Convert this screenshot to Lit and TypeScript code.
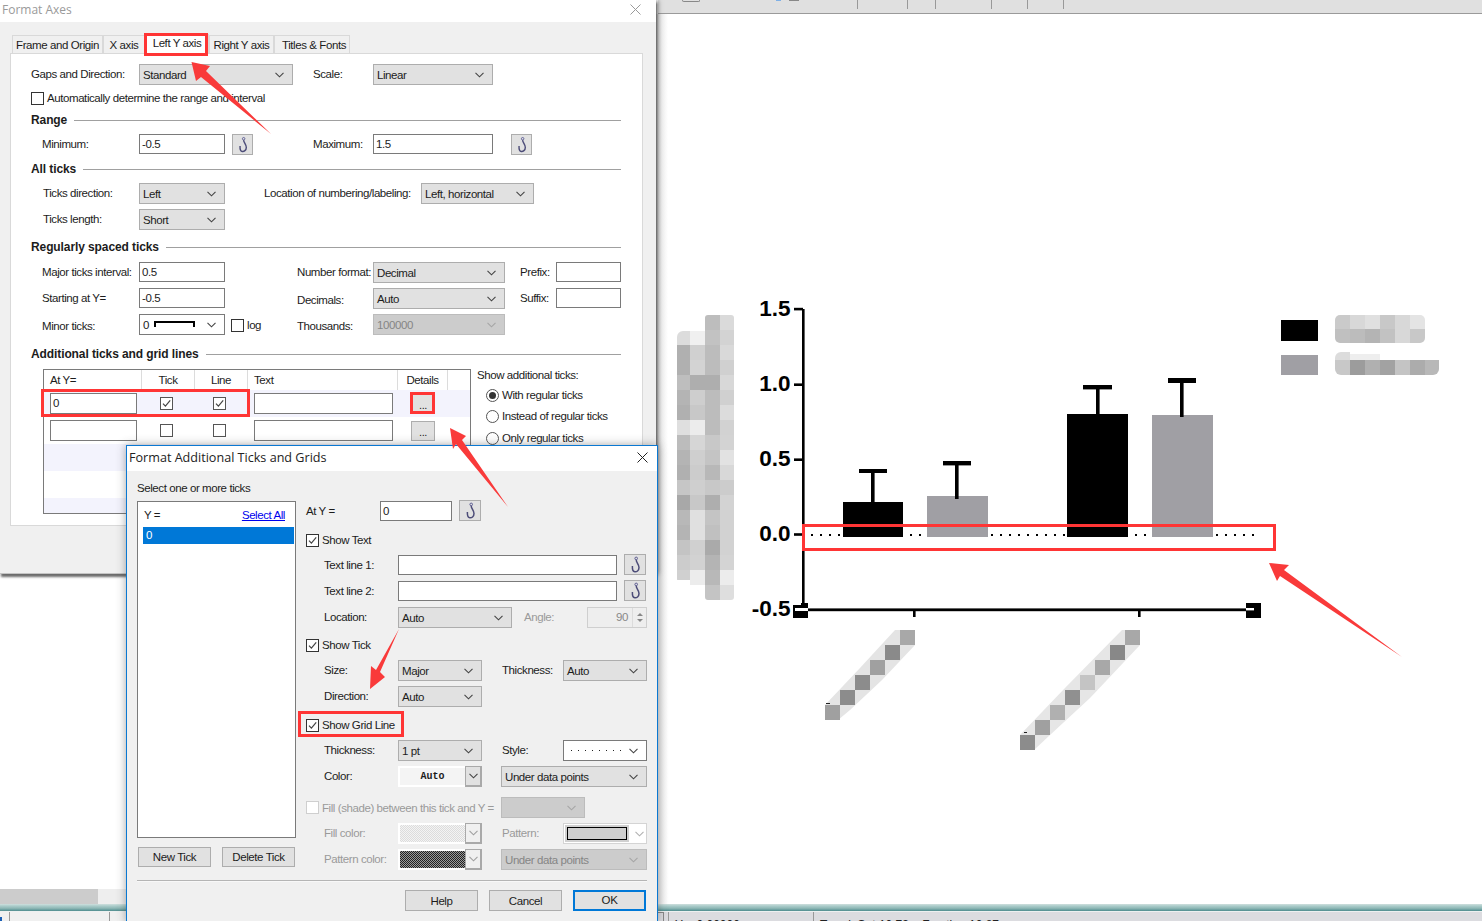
import { LitElement, html, css, svg, nothing } from "lit";
import { customElement } from "lit/decorators.js";

const chevron = html`<svg class="chev" viewBox="0 0 9 6" width="9" height="6"><path d="M0.5 0.8 L4.5 4.8 L8.5 0.8" fill="none" stroke="currentColor" stroke-width="1.1"/></svg>`;

const hook = html`<svg viewBox="0 0 20 20" width="20" height="20"><circle cx="11.2" cy="3.4" r="1.3" fill="none" stroke="#5b5b92" stroke-width="1"/><path d="M11.3 4.8 C10.8 7 14 9 14 12.5 C14 15.8 11.5 17 9.8 16.8 C8 16.6 7.2 15 7.4 11" fill="none" stroke="#4c4c78" stroke-width="1.5"/></svg>`;

const tick = html`<svg viewBox="0 0 11 11" width="11" height="11"><path d="M2 5.6 L4.4 8.2 L9.2 2.4" fill="none" stroke="#444" stroke-width="1.2"/></svg>`;

function sel(text: unknown, cls = "") {
  return html`<div class="sel ${cls}"><span class="sel-t">${text}</span>${chevron}</div>`;
}
function inp(text = "", cls = "") {
  return html`<div class="inp ${cls}">${text}</div>`;
}
function hk() {
  return html`<div class="hk">${hook}</div>`;
}
function cb(checked = false, cls = "") {
  return html`<span class="cb ${cls}">${checked ? tick : nothing}</span>`;
}
function radio(on: boolean, label: string) {
  return html`<div class="radio-row"><span class="radio">${on ? html`<i></i>` : nothing}</span>${label}</div>`;
}
function colorBox(cls: string, text = "") {
  return html`<div class="cbox ${cls}"><div class="cbox-in">${text}</div><div class="cbox-arrow">${chevron}</div></div>`;
}

const mos = [
  [null, null, 0xbd, 0xda],
  [0xdc, 0xf0, 0xc2, 0xd3],
  [0xb0, 0xd0, 0xbc, 0xd9],
  [0xb0, 0xd3, 0xbc, 0xd0],
  [0xbe, 0xae, 0xae, 0xd8],
  [0xb4, 0xce, 0xbc, 0xd0],
  [0xb0, 0xc8, 0xbc, 0xdc],
  [0xdf, 0xec, 0xbc, 0xd2],
  [0xbc, 0xd6, 0xc8, 0xd3],
  [0xb4, 0xcf, 0xc4, 0xe2],
  [0xb0, 0xcc, 0xb8, 0xd8],
  [0xc6, 0xcf, 0xc8, 0xcc],
  [0xa8, 0xc8, 0xae, 0xd3],
  [0xb8, 0xe0, 0xc4, 0xd2],
  [0xb4, 0xe0, 0xc0, 0xd2],
  [0xc4, 0xd0, 0xaa, 0xd2],
  [0xcc, 0xd2, 0xb4, 0xd4],
  [0xd0, 0xec, 0xb8, 0xec],
  [null, null, 0xc4, 0xde],
];
const colX = [677, 690, 705, 720];
const colW = [13, 15, 15, 14];
const g = (v: number) => `rgb(${v},${v},${v})`;

function cells(list: [number, number, number, number, number][]) {
  return list.map(([x, y, w, h, v]) => svg`<rect x=${x} y=${y} width=${w} height=${h} fill=${g(v)} />`);
}

function chart() {
  const ylab: [string, number][] = [["1.5", 309], ["1.0", 384], ["0.5", 459], ["0.0", 534], ["-0.5", 609]];
  const mosaic: [number, number, number, number, number][] = [];
  mos.forEach((row, r) =>
    row.forEach((v, c) => {
      if (v !== null) mosaic.push([colX[c], 315 + r * 15, colW[c], r === 17 && c === 0 ? 10 : 15, v]);
    })
  );
  const diag1: [number, number, number, number, number][] = [
    [900, 630, 15, 15, 0xa8], [885, 645, 15, 15, 0x8a], [870, 660, 15, 15, 0xa0],
    [855, 675, 15, 15, 0x8c], [840, 690, 15, 15, 0x8c], [825, 705, 15, 15, 0xa0],
  ];
  const diag2: [number, number, number, number, number][] = [
    [1125, 630, 15, 15, 0xa8], [1110, 645, 15, 15, 0x88], [1095, 660, 15, 15, 0xa8],
    [1080, 675, 15, 15, 0xc4], [1065, 690, 15, 15, 0x90], [1050, 705, 15, 15, 0xb0],
    [1035, 720, 15, 15, 0xa0], [1020, 735, 15, 15, 0x8c],
  ];
  const leg1: [number, number, number, number, number][] = [
    [1335, 315, 15, 14, 0xca], [1350, 315, 15, 14, 0xd8], [1365, 315, 15, 14, 0xe0],
    [1380, 315, 15, 14, 0xc8], [1395, 315, 15, 14, 0xd8], [1410, 315, 15, 14, 0xe4],
    [1335, 329, 15, 14, 0xc0], [1350, 329, 15, 14, 0xbc], [1365, 329, 15, 14, 0xb4],
    [1380, 329, 15, 14, 0xc2], [1395, 329, 15, 14, 0xd8], [1410, 329, 15, 14, 0xc8],
  ];
  const leg2: [number, number, number, number, number][] = [
    [1335, 352, 15, 8, 0xdc], [1350, 354, 30, 6, 0xee],
    [1335, 360, 15, 15, 0xc8], [1350, 360, 15, 15, 0x9c], [1365, 360, 15, 15, 0xb0],
    [1380, 360, 15, 15, 0xa2], [1395, 360, 15, 15, 0xc4], [1410, 360, 15, 15, 0xac], [1425, 360, 14, 15, 0xb8],
  ];
  return svg`
    <defs>
      <clipPath id="lg1"><rect x="1335" y="315" width="90" height="28" rx="5"/></clipPath>
      <clipPath id="lg2"><rect x="1335" y="352" width="104" height="23" rx="6"/></clipPath>
      <clipPath id="mm"><rect x="677" y="331" width="57" height="254" rx="6"/><rect x="705" y="315" width="29" height="285" rx="3"/></clipPath>
    </defs>
    <g clip-path="url(#mm)">${cells(mosaic)}</g>
    <polygon points="895,630 915,630 915,645 882,680 850,710 838,720 825,720 825,705 860,668" fill="#e4e4e4"/>
    ${cells(diag1)}
    <polygon points="1122,630 1140,630 1140,645 1090,698 1050,735 1034,750 1020,750 1020,735 1065,688" fill="#e6e6e6"/>
    ${cells(diag2)}
    <rect x="826" y="703" width="4" height="1" fill="#222"/>
    <rect x="1024" y="732" width="3" height="1" fill="#222"/>
    <g clip-path="url(#lg1)">${cells(leg1)}</g>
    <g clip-path="url(#lg2)">${cells(leg2)}</g>
    <rect x="1281" y="320" width="37" height="21" fill="#000"/>
    <rect x="1281" y="355" width="37" height="20" fill="#a09fa4"/>
    <line x1="811" y1="535" x2="1254" y2="535" stroke="#000" stroke-width="2" stroke-dasharray="2 7"/>
    <rect x="802" y="309" width="2.6" height="301" fill="#000"/>
    <rect x="802" y="608.4" width="446" height="2.8" fill="#000"/>
    ${[309, 384.6, 459.6, 534.4].map((y) => svg`<rect x="794" y=${y - 1.2} width="9" height="2.6" fill="#000"/>`)}
    ${ylab.map(([t, y]) => svg`<text x="790.5" y=${y + 7} class="axis" text-anchor="end">${t}</text>`)}
    <rect x="793" y="603" width="15" height="15" fill="#000"/>
    <rect x="795" y="608" width="13" height="3" fill="#fff"/>
    <rect x="793" y="603" width="8" height="2" fill="#fff"/>
    <rect x="1246" y="603" width="15" height="15" fill="#000"/>
    <rect x="1246" y="608" width="8" height="2.4" fill="#fff"/>
    <rect x="913" y="611" width="2.6" height="6" fill="#000"/>
    <rect x="1138" y="611" width="2.6" height="6" fill="#000"/>
    <rect x="843" y="502" width="60" height="35" fill="#000"/>
    <rect x="927" y="496" width="61" height="41" fill="#a09fa4"/>
    <rect x="1067" y="414" width="61" height="123" fill="#000"/>
    <rect x="1152" y="415" width="61" height="122" fill="#a09fa4"/>
    <rect x="871" y="471" width="3.6" height="32" fill="#000"/>
    <rect x="859" y="469" width="28" height="4" fill="#000"/>
    <rect x="955" y="463" width="3.6" height="36" fill="#000"/>
    <rect x="943" y="461" width="28" height="4.4" fill="#000"/>
    <rect x="1096" y="387" width="3.6" height="28" fill="#000"/>
    <rect x="1083" y="385" width="29" height="4.4" fill="#000"/>
    <rect x="1180" y="380" width="3.6" height="37" fill="#000"/>
    <rect x="1168" y="378" width="28" height="5" fill="#000"/>
    <rect x="803.5" y="525.5" width="471" height="24" fill="none" stroke="#ff3535" stroke-width="3"/>
    <polygon points="1269,563 1289,565 1284,570 1402,657 1280,576 1277,581" fill="#f93a3a"/>
  `;
}

function arrows() {
  return svg`
    <polygon points="191.5,62 210,66 206,71 271,134 201,77 196,81" fill="#f93a3a"/>
    <polygon points="450,428 466,436 462,440 508,507 456,444 453,449" fill="#f93a3a"/>
    <polygon points="399,629 380,672 385,677 370,689 371,666 376,670" fill="#f93a3a"/>
  `;
}

@customElement("app-root")
export class AppRoot extends LitElement {
  static styles = css`
    :host {
      display: flex;
      flex-direction: column;
      position: relative;
      width: 1482px;
      height: 921px;
      overflow: hidden;
      background: #fff;
      font-family: "Liberation Sans", Arial, sans-serif;
      font-size: 11.5px;
      letter-spacing: -0.42px;
      color: #1c1c1c;
    }
    * { box-sizing: border-box; }

    /* page frame */
    .toolbar {
      height: 14px;
      margin-left: 658px;
      background: #e0e0e0;
      border-bottom: 1px solid #9a9a9a;
      display: flex;
      position: relative;
    }
    .tb-oval { width: 18px; height: 2px; margin-left: 24px; border: 1px solid #888; border-top: 0; border-radius: 0 0 5px 5px; }
    .tb-blue { width: 5px; height: 1px; margin-left: 76px; background: #7fb0e6; }
    .tb-grey { width: 10px; height: 1px; margin-left: 8px; background: #888; }
    .tb-sep { width: 1px; height: 9px; background: #999; }
    .ms56 { margin-left: 58px; } .ms49 { margin-left: 49px; } .ms27 { margin-left: 27px; } .ms55 { margin-left: 55px; } .ms35 { margin-left: 35px; }
    .canvas { flex: 1; }
    .lowstrip { height: 15px; display: flex; }
    .ls-a { width: 98px; background: #cccccc; }
    .ls-b { width: 30px; background: #eeeeee; }
    .teal {
      height: 7px;
      background: linear-gradient(#cfdfdd 0%, #a9cbc9 30%, #8fb8b6 60%, #4f8d8f 100%);
    }
    .status { height: 10px; display: flex; background: #dcdce0; overflow: hidden; border-top: 1px solid #eef0f0; color: #222; font-size: 12px; letter-spacing: 0; }
    .st-left { width: 658px; background: #f0f0f0; display: flex; flex: none; }
    .st-blue { width: 2px; height: 4px; margin-top: 5px; background: #1a5fb4; }
    .st-s1 { width: 100px; margin-left: 7px; border-left: 1px solid #999; }
    .st-s2 { width: 1px; background: #999; }
    .st-box { width: 6px; border: 1px solid #888; border-left: 0; height: 10px; }
    .st-cell { border-left: 1px solid #999; padding: 7px 0 0 6px; white-space: nowrap; line-height: 13px; }
    .st-c1 { width: 145px; margin-left: 4px; }
    .st-c2 { flex: 1; }

    /* windows */
    .win { position: absolute; display: flex; flex-direction: column; background: #f0f0f0; }
    .axes {
      left: 0; top: 0; width: 656px; height: 574px;
      border-bottom: 1px solid #c4c4c4;
      box-shadow: 1px 3px 2px rgba(70, 70, 70, 0.75), 3px 0 4px rgba(90, 90, 90, 0.5);
    }
    .title { background: #fff; display: flex; align-items: center; justify-content: space-between; flex: none; font-family: "Open Sans", "Liberation Sans", sans-serif; letter-spacing: 0; }
    .axes .title { height: 22px; padding: 0 15px 4px 2px; color: #9a9a9a; font-size: 12px; }
    .x { width: 11px; height: 11px; display: block; }
    .axes-body { flex: 1; padding: 12px 13px 0 10px; display: flex; flex-direction: column; }
    .tabs { display: flex; height: 19px; padding-left: 2px; align-items: flex-end; }
    .tab { height: 18px; line-height: 18px; background: #f0f0f0; border: 1px solid #d9d9d9; border-bottom: 0; text-align: center; white-space: nowrap; }
    .t1 { width: 91px; } .t2 { width: 42px; } .t3 { width: 64px; height: 20px; background: #fff; line-height: 16px; position: relative; z-index: 1; margin-bottom: -1px; } .t4 { width: 65px; } .t5 { width: 76px; padding-left: 4px; }
    .panel { height: 473px; background: #fff; border: 1px solid #d9d9d9; padding: 10px 21px 0 20px; display: flex; flex-direction: column; position: relative; }

    .row { display: grid; height: 21px; align-items: start; flex: none; }
    .row > .lb { line-height: 20px; white-space: nowrap; }
    .lb-in { padding-left: 11px; }
    .lb-in2 { padding-left: 12px; }
    .ra { grid-template-columns: 108px 154px 20px 60px 120px; }
    .rb { grid-template-columns: 108px 86px 7px 21px 60px 60px 120px 18px 21px; }
    .rc { grid-template-columns: 108px 86px 39px 157px 113px; }
    .rd { grid-template-columns: 108px 86px; }
    .re { grid-template-columns: 108px 86px 72px 76px 132px 15px 36px 65px; }
    .lb.low { padding-top: 2px; }
    .chk-row { display: flex; align-items: center; height: 14px; flex: none; white-space: nowrap; }
    .chk-row .cb { margin-right: 3px; }
    .log { margin: 4px 0 0 6px; }
    .hd { display: flex; align-items: center; height: 14px; font-weight: bold; font-size: 12px; flex: none; white-space: nowrap; letter-spacing: -0.1px; }
    .hd::after { content: ""; flex: 1; height: 1px; background: #a0a0a0; margin-left: 7px; }
    .mt5 { margin-top: 5px; } .mt6 { margin-top: 6px; } .mt7 { margin-top: 7px; } .mt8 { margin-top: 8px; }
    .mt9 { margin-top: 9px; } .mt10 { margin-top: 10px; } .mt11 { margin-top: 11px; } .mt12 { margin-top: 12px; }

    /* controls */
    .sel { height: 21px; background: #e1e1e1; border: 1px solid #adadad; display: flex; align-items: center; justify-content: space-between; padding: 0 8px 0 3px; color: #333; white-space: nowrap; }
    .sel-t { display: flex; align-items: center; gap: 5px; color: #1c1c1c; }
    .sel .chev { color: #444; flex: none; }
    .sel.wh { background: #fff; border-color: #7a7a7a; }
    .sel.dis { background: #cccccc; border-color: #bcbcbc; }
    .sel.dis .sel-t { color: #858585; }
    .sel.dis .chev { color: #a6a6a6; }
    .inp { height: 20px; background: #fff; border: 1px solid #7a7a7a; padding: 0 2px; line-height: 18px; }
    .hk { height: 21px; width: 21px; background: #e1e1e1; border: 1px solid #adadad; display: flex; align-items: center; justify-content: center; }
    .cb { width: 13px; height: 13px; background: #fff; border: 1px solid #333; display: inline-flex; align-items: center; justify-content: center; flex: none; }
    .cb.soft { border-color: #555; }
    .cb.off { border-color: #cfcfcf; }

    /* additional ticks table */
    .tbl-wrap { display: flex; margin-left: 12px; height: 145px; flex: none; }
    .tbl { width: 428px; height: 145px; border: 1px solid #7a7a7a; background: #fff; flex: none; position: relative; }
    .tr { display: grid; grid-template-columns: 98px 53px 53px 150px 50px; align-items: center; height: 27px; }
    .th { height: 20px; }
    .th > div { height: 20px; line-height: 20px; border-right: 1px solid #dcdcdc; }
    .th .tc { text-align: center; }
    .th .tl { padding-left: 6px; }
    .alt { background: #f3f3fd; }
    .short { height: 15px; }
    .cell-in { padding-left: 6px; }
    .cell-cb { padding-left: 18px; display: flex; }
    .cell-in .inp { height: 21px; line-height: 19px; }
    .w87 { width: 87px; } .w139 { width: 139px; }
    .det { width: 24px; height: 20px; margin-left: 13px; background: #e1e1e1; border: 1px solid #adadad; text-align: center; line-height: 20px; font-size: 11px; }
    .red { position: absolute; border: 3px solid #ff3535; z-index: 2; }
    .red1 { left: -3px; top: 19px; width: 209px; height: 28px; }
    .red2 { left: 366px; top: 22px; width: 25px; height: 22px; }
    .tabred { left: -2px; top: -2px; width: 64px; height: 23px; }
    .tbl-side { margin-left: 6px; white-space: nowrap; }
    .side-t { line-height: 13px; }
    .radio-row { display: flex; align-items: center; height: 14px; margin: 7px 0 0 9px; }
    .radio-row:nth-child(2) { margin-top: 6px; }
    .radio-row:nth-child(4) { margin-top: 8px; }
    .radio { width: 13px; height: 13px; border-radius: 50%; border: 1px solid #555; background: #fff; display: inline-flex; align-items: center; justify-content: center; margin-right: 3px; }
    .radio i { width: 7px; height: 7px; border-radius: 50%; background: #333; }

    /* second dialog */
    .ticks {
      left: 126px; top: 445px; width: 532px; height: 478px;
      border: 1px solid #0a78d2;
      box-shadow: 0 0 9px rgba(60, 60, 60, 0.45);
      z-index: 3;
    }
    .ticks .title { height: 25px; padding: 0 9px 3px 2px; color: #222; font-size: 12.6px; }
    .ticks-body { flex: 1; padding: 10px 10px 0 10px; display: flex; flex-direction: column; }
    .sel-hint { height: 14px; line-height: 14px; flex: none; }
    .main { display: flex; margin-top: 6px; flex: none; height: 370px; }
    .left { width: 159px; flex: none; margin-right: 10px; display: flex; flex-direction: column; }
    .list { height: 337px; background: #fff; border: 1px solid #7a7a7a; padding: 0 1px 0 5px; }
    .list-h { height: 25px; display: flex; justify-content: space-between; align-items: center; padding: 0 9px 0 1px; }
    .link { color: #0000ee; text-decoration: underline; }
    .list-i { height: 17px; line-height: 17px; background: #0078d7; color: #fff; padding-left: 3px; }
    .lbtns { display: flex; margin-top: 9px; padding-left: 1px; gap: 11px; }
    .btn { width: 73px; height: 20px; background: #e1e1e1; border: 1px solid #adadad; text-align: center; line-height: 18px; }
    .right { width: 341px; display: flex; flex-direction: column; }
    .r-at { grid-template-columns: 74px 72px 7px 22px; height: 20px; }
    .r-at .hk, .r-t .hk { margin-top: -1px; width: 22px; }
    .r-t { grid-template-columns: 92px 219px 7px 22px; }
    .r-l { grid-template-columns: 92px 114px 12px 63px 60px; }
    .r-s { grid-template-columns: 92px 84px 20px 61px 84px; }
    .r-d { grid-template-columns: 92px 84px; }
    .r-c { grid-template-columns: 92px 84px 19px 146px; }
    .r-f { grid-template-columns: 195px 84px; }
    .in18 { padding-left: 18px; }
    .g { color: #9a9a9a; }
    .r-f .chk-row { height: 21px; color: #9a9a9a; }
    .spin { height: 21px; border: 1px solid #cfcfcf; background: #eeeeee; color: #888; text-align: right; padding-right: 18px; line-height: 19px; position: relative; }
    .spin-b { position: absolute; right: 0; top: 0; bottom: 0; width: 14px; border-left: 1px solid #dcdcdc; display: flex; flex-direction: column; align-items: center; justify-content: center; gap: 3px; }
    .spin-b i { width: 0; height: 0; border-left: 3px solid transparent; border-right: 3px solid transparent; }
    .up { border-bottom: 3px solid #888; }
    .dn { border-top: 3px solid #888; }
    .dots { width: 52px; height: 1px; background: repeating-linear-gradient(90deg, #222 0 1px, transparent 1px 7px); display: block; }
    .sel.st { padding-left: 7px; border-color: #7a7a7a; background: #fff; }
    .cbox { height: 21px; display: flex; background: #fff; }
    .cbox-in { flex: 1; margin: 2px 0 2px 2px; background: #f4f4f4; text-align: center; line-height: 17px; font-family: "Liberation Mono", monospace; font-weight: bold; font-size: 10px; letter-spacing: 0; }
    .cbox-arrow { width: 17px; background: #e1e1e1; border: 1px solid #a9a9a9; border-right-width: 2px; border-bottom-width: 2px; display: flex; align-items: center; justify-content: center; color: #444; }
    .cbox.light .cbox-in { background: repeating-conic-gradient(#dcdcdc 0% 25%, #f4f4f4 0% 50%) 0 0 / 2px 2px; }
    .cbox.dark .cbox-in { background: repeating-conic-gradient(#222 0% 25%, #9a9a9a 0% 50%) 0 0 / 2px 2px; }
    .cbox.light .cbox-arrow, .cbox.dark .cbox-arrow { background: #f0f0f0; color: #a0a0a0; }
    .pat { height: 21px; display: flex; align-items: center; background: #fff; border: 1px solid #d4d4d4; }
    .pat-in { width: 64px; height: 17px; margin-left: 1px; background: #d0d0d0; display: flex; align-items: center; justify-content: center; }
    .pat-in i { width: 60px; height: 13px; background: #cfcfcf; border: 1px solid #000; display: block; }
    .pat .chev { color: #b0b0b0; margin-left: 6px; }
    .sep { height: 2px; background: #b5b5b5; margin-top: 9px; flex: none; border-bottom: 1px solid #f8f8f8; }
    .foot { display: flex; justify-content: flex-end; gap: 11px; margin-top: 8px; padding-right: 1px; }
    .foot .btn { height: 21px; line-height: 20px; }
    .ok { border: 2px solid #0078d7; line-height: 17px !important; }
    .grid-red { position: absolute; left: 171px; top: 265px; width: 106px; height: 26px; border: 3px solid #ff3535; }

    .ov { position: absolute; left: 0; top: 0; width: 1482px; height: 921px; pointer-events: none; letter-spacing: 0; }
    .ov-chart { z-index: 0; }
    .ov-arrows { z-index: 4; }
    .axis { font-family: "Liberation Sans", Arial, sans-serif; font-weight: bold; font-size: 22.5px; fill: #000; }
    .chrome-edge { position: absolute; left: 656px; top: 14px; width: 12px; height: 890px; background: linear-gradient(90deg, #dedede, #fff); }
  `;

  private closeX() {
    return html`<svg class="x" viewBox="0 0 11 11"><path d="M0.5 0.5 L10.5 10.5 M10.5 0.5 L0.5 10.5" fill="none" stroke="currentColor" stroke-width="1"/></svg>`;
  }

  render() {
    return html`
      <div class="toolbar">
        <div class="tb-oval"></div><div class="tb-blue"></div><div class="tb-grey"></div>
        <div class="tb-sep ms56"></div><div class="tb-sep ms49"></div><div class="tb-sep ms27"></div>
        <div class="tb-sep ms55"></div><div class="tb-sep ms35"></div><div class="tb-sep ms35"></div>
      </div>
      <div class="canvas"></div>
      <div class="lowstrip"><div class="ls-a"></div><div class="ls-b"></div></div>
      <div class="teal"></div>
      <div class="status">
        <div class="st-left">
          <div class="st-blue"></div><div class="st-s1"></div><div class="st-s2"></div>
        </div>
        <div class="st-box"></div>
        <div class="st-cell st-c1">Y = 0.00000</div>
        <div class="st-cell st-c2">Trend: Set 10.73 &nbsp;&nbsp; Fraction 10.87</div>
      </div>

      <div class="chrome-edge"></div>
      <svg class="ov ov-chart" viewBox="0 0 1482 921">${chart()}</svg>

      ${this.axesWindow()}
      ${this.ticksWindow()}

      <svg class="ov ov-arrows" viewBox="0 0 1482 921">${arrows()}</svg>
    `;
  }

  private axesWindow() {
    return html`
      <div class="win axes">
        <div class="title"><span>Format Axes</span>${this.closeX()}</div>
        <div class="axes-body">
          <div class="tabs">
            <div class="tab t1">Frame and Origin</div>
            <div class="tab t2">X axis</div>
            <div class="tab t3">Left Y axis<div class="red tabred"></div></div>
            <div class="tab t4">Right Y axis</div>
            <div class="tab t5">Titles &amp; Fonts</div>
          </div>
          <div class="panel">
            <div class="row ra">
              <div class="lb">Gaps and Direction:</div>${sel("Standard")}<div></div>
              <div class="lb">Scale:</div>${sel("Linear")}
            </div>
            <div class="chk-row mt6">${cb()}Automatically determine the range and interval</div>
            <div class="hd mt8">Range</div>
            <div class="row rb mt7">
              <div class="lb lb-in">Minimum:</div>${inp("-0.5")}<div></div>${hk()}<div></div>
              <div class="lb">Maximum:</div>${inp("1.5")}<div></div>${hk()}
            </div>
            <div class="hd mt7">All ticks</div>
            <div class="row rc mt7">
              <div class="lb lb-in2">Ticks direction:</div>${sel("Left")}<div></div>
              <div class="lb">Location of numbering/labeling:</div>${sel("Left, horizontal")}
            </div>
            <div class="row rd mt5">
              <div class="lb lb-in2">Ticks length:</div>${sel("Short")}
            </div>
            <div class="hd mt10">Regularly spaced ticks</div>
            <div class="row re mt8">
              <div class="lb lb-in">Major ticks interval:</div>${inp("0.5")}<div></div>
              <div class="lb">Number format:</div>${sel("Decimal")}<div></div>
              <div class="lb">Prefix:</div>${inp()}
            </div>
            <div class="row re mt5">
              <div class="lb lb-in">Starting at Y=</div>${inp("-0.5")}<div></div>
              <div class="lb low">Decimals:</div>${sel("Auto")}<div></div>
              <div class="lb">Suffix:</div>${inp()}
            </div>
            <div class="row re mt5">
              <div class="lb lb-in low">Minor ticks:</div>
              ${sel(html`0<svg width="42" height="8" viewBox="0 0 42 8"><path d="M1 6 V1 H40 V6" fill="none" stroke="#000" stroke-width="2"/></svg>`, "wh")}
              <div class="chk-row log">${cb(false)}log</div>
              <div class="lb low">Thousands:</div>${sel("100000", "dis")}
            </div>
            <div class="hd mt12">Additional ticks and grid lines</div>
            <div class="tbl-wrap mt8">
              <div class="tbl">
                <div class="tr th">
                  <div class="tl">At Y=</div><div class="tc">Tick</div><div class="tc">Line</div><div class="tl">Text</div><div class="tc">Details</div>
                </div>
                <div class="tr alt">
                  <div class="cell-in">${inp("0", "w87")}</div>
                  <div class="cell-cb">${cb(true, "soft")}</div>
                  <div class="cell-cb">${cb(true, "soft")}</div>
                  <div class="cell-in">${inp("", "w139")}</div>
                  <div><div class="det">...</div></div>
                </div>
                <div class="tr">
                  <div class="cell-in">${inp("", "w87")}</div>
                  <div class="cell-cb">${cb(false, "soft")}</div>
                  <div class="cell-cb">${cb(false, "soft")}</div>
                  <div class="cell-in">${inp("", "w139")}</div>
                  <div><div class="det">...</div></div>
                </div>
                <div class="tr alt"></div>
                <div class="tr"></div>
                <div class="tr alt short"></div>
                <div class="red red1"></div>
                <div class="red red2"></div>
              </div>
              <div class="tbl-side">
                <div class="side-t">Show additional ticks:</div>
                ${radio(true, "With regular ticks")}
                ${radio(false, "Instead of regular ticks")}
                ${radio(false, "Only regular ticks")}
              </div>
            </div>
          </div>
        </div>
      </div>
    `;
  }

  private ticksWindow() {
    return html`
      <div class="win ticks">
        <div class="title"><span>Format Additional Ticks and Grids</span>${this.closeX()}</div>
        <div class="ticks-body">
          <div class="sel-hint">Select one or more ticks</div>
          <div class="main">
            <div class="left">
              <div class="list">
                <div class="list-h"><span>Y =</span><span class="link">Select All</span></div>
                <div class="list-i">0</div>
              </div>
              <div class="lbtns"><div class="btn">New Tick</div><div class="btn">Delete Tick</div></div>
            </div>
            <div class="right">
              <div class="row r-at"><div class="lb">At Y =</div>${inp("0")}<div></div>${hk()}</div>
              <div class="chk-row mt12">${cb(true)}Show Text</div>
              <div class="row r-t mt8"><div class="lb in18">Text line 1:</div>${inp()}<div></div>${hk()}</div>
              <div class="row r-t mt5"><div class="lb in18">Text line 2:</div>${inp()}<div></div>${hk()}</div>
              <div class="row r-l mt5">
                <div class="lb in18">Location:</div>${sel("Auto")}<div></div>
                <div class="lb g">Angle:</div>
                <div class="spin">90<div class="spin-b"><i class="up"></i><i class="dn"></i></div></div>
              </div>
              <div class="chk-row mt10">${cb(true)}Show Tick</div>
              <div class="row r-s mt8">
                <div class="lb in18">Size:</div>${sel("Major")}<div></div>
                <div class="lb">Thickness:</div>${sel("Auto")}
              </div>
              <div class="row r-d mt5"><div class="lb in18">Direction:</div>${sel("Auto")}</div>
              <div class="chk-row mt11">${cb(true)}Show Grid Line</div>
              <div class="row r-s mt8">
                <div class="lb in18">Thickness:</div>${sel("1 pt")}<div></div>
                <div class="lb">Style:</div>${sel(html`<i class="dots"></i>`, "st")}
              </div>
              <div class="row r-c mt5">
                <div class="lb in18">Color:</div>${colorBox("", "Auto")}<div></div>${sel("Under data points")}
              </div>
              <div class="row r-f mt10">
                <div class="chk-row">${cb(false, "off")}Fill (shade) between this tick and Y =</div>${sel("", "dis")}
              </div>
              <div class="row r-s mt5">
                <div class="lb in18 g">Fill color:</div>${colorBox("light")}<div></div>
                <div class="lb g">Pattern:</div>
                <div class="pat"><div class="pat-in"><i></i></div>${chevron}</div>
              </div>
              <div class="row r-c mt5">
                <div class="lb in18 g">Pattern color:</div>${colorBox("dark")}<div></div>${sel("Under data points", "dis")}
              </div>
            </div>
          </div>
          <div class="sep"></div>
          <div class="foot">
            <div class="btn">Help</div><div class="btn">Cancel</div><div class="btn ok">OK</div>
          </div>
        </div>
        <div class="grid-red"></div>
      </div>
    `;
  }
}
